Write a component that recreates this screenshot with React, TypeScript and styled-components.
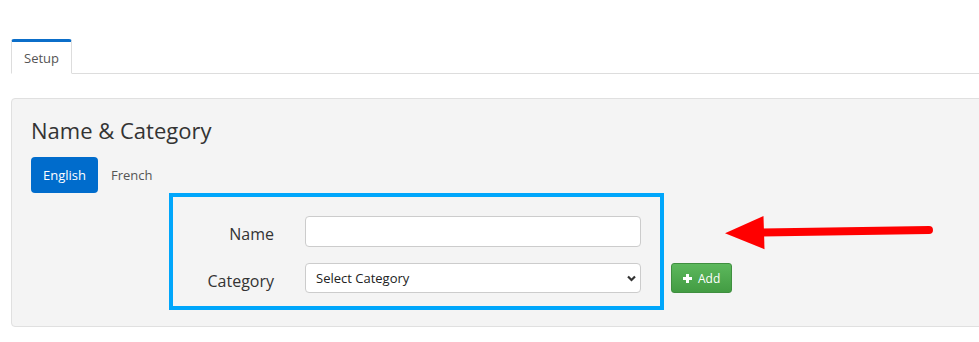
import React from "react";
import styled, { createGlobalStyle } from "styled-components";

const Global = createGlobalStyle`
  html, body { margin: 0; padding: 0; background: #fff; overflow: hidden; }
  body { font-family: "Open Sans", "Liberation Sans", sans-serif; color: #333; }
  * { box-sizing: border-box; }
`;

const Page = styled.div`
  position: relative;
  width: 979px;
  height: 342px;
  padding: 39px 0 0 11px;
`;

const TabNav = styled.div`
  display: flex;
  border-bottom: 1px solid #dddddd;
`;

const Tab = styled.div<{ $active?: boolean }>`
  margin-bottom: -1px;
  padding: 6px 12px 5px;
  font-size: 13px;
  line-height: 20px;
  color: #555;
  background: #fff;
  border: 1px solid #dddddd;
  border-top: 3px solid #0b6ec9;
  border-bottom: 1px solid #fff;
  border-radius: 3px 3px 0 0;
`;

const Panel = styled.div`
  margin-top: 24px;
  width: calc(100% + 20px);
  background: #f4f4f4;
  border: 1px solid #e0e0e0;
  border-radius: 4px;
  padding: 18px 19px 16px;
`;

const Heading = styled.h2`
  margin: 0 0 14px;
  font-size: 22px;
  line-height: 26px;
  font-weight: 400;
  color: #333;
`;

const Pills = styled.div`
  display: flex;
  gap: 1px;
`;

const Pill = styled.div<{ $active?: boolean }>`
  padding: 8px 12px;
  font-size: 13px;
  line-height: 20px;
  border-radius: 4px;
  color: ${(p) => (p.$active ? "#fff" : "#555")};
  background: ${(p) => (p.$active ? "#006ccc" : "transparent")};
`;

const FormRow = styled.div`
  display: flex;
  align-items: flex-end;
`;

const FormBox = styled.div`
  margin-left: 138px;
  border: 4px solid #00a6fb;
  display: grid;
  grid-template-columns: 101px 336px;
  column-gap: 31px;
  row-gap: 16px;
  padding: 19px 19px 13px 0;
`;

const Label = styled.label`
  text-align: right;
  font-size: 16px;
  line-height: 22px;
  padding-top: 7px;
  color: #333;
`;

const TextInput = styled.input`
  height: 31px;
  width: 100%;
  border: 1px solid #cccccc;
  border-radius: 4px;
  background: #fff;
  font: 13px "Open Sans", sans-serif;
  padding: 0 10px;
  outline: none;
`;

const SelectWrap = styled.div`
  position: relative;
  height: 30px;
`;

const Select = styled.select`
  appearance: none;
  -webkit-appearance: none;
  width: 100%;
  height: 30px;
  border: 1px solid #cccccc;
  border-radius: 4px;
  background: #fff;
  font: 13px "Open Sans", sans-serif;
  color: #222;
  padding: 0 24px 0 10px;
  outline: none;
`;

const Chevron = styled.svg`
  position: absolute;
  right: 5px;
  top: 12px;
  pointer-events: none;
`;

const AddButton = styled.button`
  margin: 0 0 17px 7px;
  height: 30px;
  display: flex;
  align-items: center;
  gap: 6px;
  padding: 0 11px;
  border: 1px solid #3f8f3f;
  border-radius: 3px;
  background: linear-gradient(#5cb85c, #439c43);
  color: #fff;
  font: 12px "Open Sans", sans-serif;
  cursor: pointer;
`;

const Arrow = styled.svg`
  position: absolute;
  left: 720px;
  top: 210px;
`;

export default function App() {
  return (
    <>
      <Global />
      <Page>
        <TabNav>
          <Tab $active>Setup</Tab>
        </TabNav>
        <Panel>
          <Heading>Name &amp; Category</Heading>
          <Pills>
            <Pill $active>English</Pill>
            <Pill>French</Pill>
          </Pills>
          <FormRow>
            <FormBox>
              <Label>Name</Label>
              <TextInput type="text" />
              <Label>Category</Label>
              <SelectWrap>
                <Select defaultValue="">
                  <option value="">Select Category</option>
                </Select>
                <Chevron width="9" height="7" viewBox="0 0 9 7">
                  <path d="M1 1.5 L4.5 5 L8 1.5" fill="none" stroke="#333" strokeWidth="2.2" />
                </Chevron>
              </SelectWrap>
            </FormBox>
            <AddButton>
              <svg width="9" height="9" viewBox="0 0 9 9">
                <path d="M3 0h3v3h3v3H6v3H3V6H0V3h3z" fill="#fff" />
              </svg>
              Add
            </AddButton>
          </FormRow>
        </Panel>
        <Arrow width="220" height="45" viewBox="0 0 220 45">
          <line x1="42" y1="22.5" x2="209" y2="20" stroke="#ff0000" strokeWidth="8" strokeLinecap="round" />
          <polygon points="5,23.3 43.5,6 44.5,39.3" fill="#ff0000" />
        </Arrow>
      </Page>
    </>
  );
}
